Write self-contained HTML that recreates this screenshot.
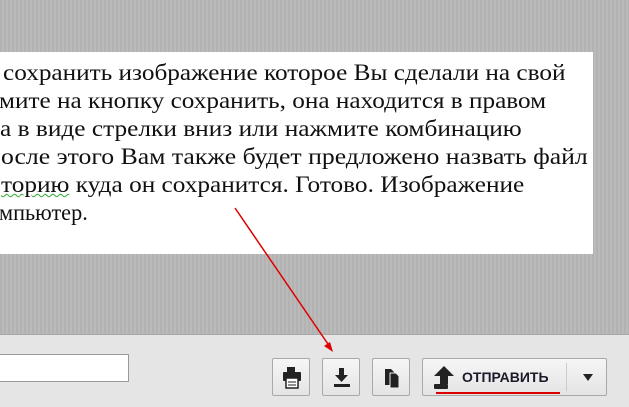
<!DOCTYPE html>
<html><head><meta charset="utf-8"><style>
html,body{margin:0;padding:0;}
body{width:629px;height:406px;position:relative;overflow:hidden;background:repeating-linear-gradient(90deg,#b2b2b2 0,#b2b2b2 2px,#bababa 2px,#bababa 4px);font-family:"Liberation Sans",sans-serif;}
.panel{position:absolute;left:0;top:52px;width:593px;height:202px;background:#fff;}
.t{position:absolute;left:3px;font-family:"Liberation Serif","Times New Roman","DejaVu Serif",serif;font-size:23px;color:#111;white-space:nowrap;line-height:28px;transform-origin:0 0;}
.bar{position:absolute;left:0;top:334px;width:629px;height:72px;background:#e5e5e5;border-top:1px solid #a8a8a8;}
.inp{position:absolute;left:-2px;top:354px;width:129px;height:26px;background:#fff;border:1px solid #999;}
.b{position:absolute;top:358px;width:38px;height:38px;background:linear-gradient(#f6f6f6,#e4e4e4);border:1px solid #a9a9a9;border-radius:2px;box-sizing:border-box;}
.send{position:absolute;left:422px;top:358px;width:185px;height:38px;background:linear-gradient(#f6f6f6,#e4e4e4);border:1px solid #a9a9a9;border-radius:2px;box-sizing:border-box;}
</style></head><body>
<div class="panel"></div>
<div class="t" data-r="566" style="top:59px">сохранить изображение которое Вы сделали на свой</div>
<div class="t" data-r="546" style="top:87px;left:-1px">мите на кнопку сохранить, она находится в правом</div>
<div class="t" data-r="522" style="top:115px;left:0px">а в виде стрелки вниз или нажмите комбинацию</div>
<div class="t" data-r="588" style="top:143px;left:1px">осле этого Вам также будет предложено назвать файл</div>
<div class="t" data-r="524" style="top:171px;left:1px"><span style="text-decoration:underline wavy #3a3;text-decoration-thickness:1px">торию</span> куда он сохранится. Готово. Изображение</div>
<div class="t" data-r="88" style="top:199px;left:-1px">мпьютер.</div>
<script>
document.querySelectorAll('.t').forEach(function(e){var r=+e.getAttribute('data-r');var l=e.offsetLeft;var w=e.scrollWidth;if(w>0)e.style.transform='scaleX('+((r-l)/w)+')';});
</script>
<div class="bar"></div>
<div class="inp"></div>
<div class="b" style="left:272px"><svg width="38" height="38" viewBox="0 0 38 38"><rect x="14" y="8" width="8" height="5" fill="#222"/><rect x="10" y="13" width="18" height="9" rx="1" fill="#222"/><rect x="13" y="19" width="12" height="10" fill="#fff" stroke="#222" stroke-width="1.5"/><line x1="15" y1="23" x2="23" y2="23" stroke="#222"/><line x1="15" y1="26" x2="23" y2="26" stroke="#222"/></svg></div>
<div class="b" style="left:322px"><svg width="38" height="38" viewBox="0 0 38 38"><path d="M16 9h5v7h4l-6.5 7-6.5-7h4z" fill="#222"/><rect x="11" y="25" width="16" height="3" fill="#222"/></svg></div>
<div class="b" style="left:372px"><svg width="38" height="38" viewBox="0 0 38 38"><path d="M12 10h6l3 3v13h-9z" fill="#222"/><path d="M17 14h6l3 3v12h-9z" fill="#222" stroke="#eee" stroke-width="1"/></svg></div>
<div class="send"><svg style="position:absolute;left:9px;top:6px" width="24" height="26" viewBox="0 0 24 26"><path d="M12 1l10 10h-6v8h-8v-8h-6z" fill="#222"/><rect x="2" y="19" width="14" height="5" rx="1" fill="#222"/></svg>
<div style="position:absolute;left:39px;top:10px;font-weight:bold;font-size:14px;color:#1a1a2a;">ОТПРАВИТЬ</div>
<div style="position:absolute;left:143px;top:4px;width:1px;height:28px;background:#ccc"></div>
<div style="position:absolute;left:160px;top:15px;width:0;height:0;border-left:5px solid transparent;border-right:5px solid transparent;border-top:7px solid #222"></div></div>
<div style="position:absolute;left:436px;top:392px;width:124px;height:2px;background:#d00"></div>
<svg style="position:absolute;left:0;top:0" width="629" height="406"><line x1="235" y1="208" x2="330" y2="347" stroke="#d00" stroke-width="1.5"/><path d="M333 352l-9-6 6-4z" fill="#d00"/></svg>
</body></html>
